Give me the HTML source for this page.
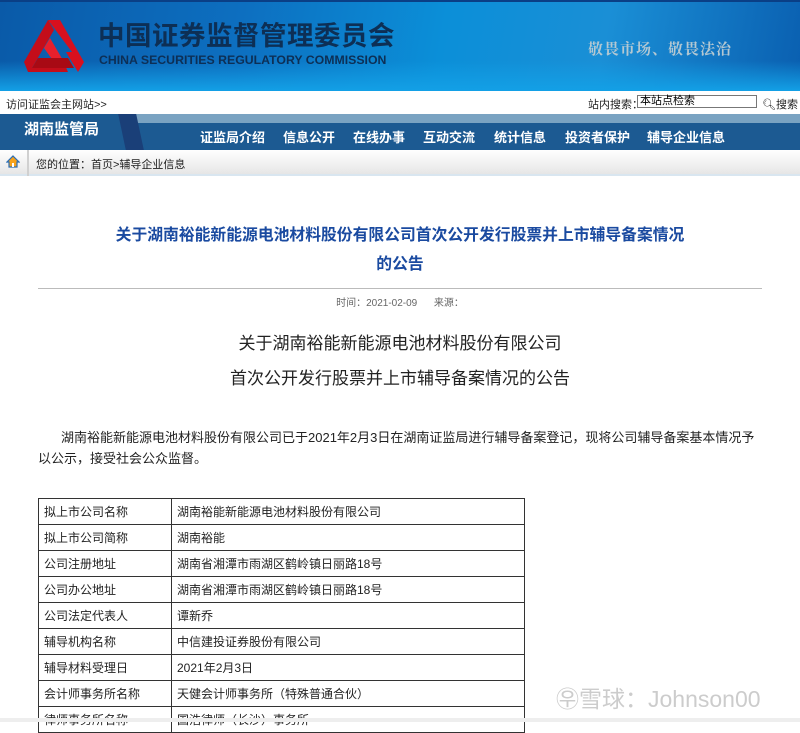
<!DOCTYPE html>
<html><head><meta charset="utf-8"><style>
*{margin:0;padding:0;box-sizing:border-box}
body{width:800px;height:722px;overflow:hidden;background:#fff;font-family:"Liberation Sans","Noto Sans CJK SC",sans-serif;position:relative}
.abs{position:absolute}
#hdr{left:0;top:0;width:800px;height:91px;background:linear-gradient(100deg,#0a5aa8 0%,#0d6fc0 30%,#0b8fd8 55%,#1a8fd6 75%,#0a5fb0 100%);border-top:2px solid #0a3f86}
#hdr .bot{position:absolute;left:0;bottom:0;width:800px;height:30px;background:linear-gradient(180deg,rgba(20,160,230,0) ,#13a0e6)}
.cn{left:98px;top:20px;font-size:26.5px;font-weight:bold;color:#0d2f55;letter-spacing:0.5px;white-space:nowrap;line-height:32px}
.en{left:99px;top:53px;font-size:12.3px;font-weight:bold;color:#0d2f55;white-space:nowrap;line-height:14px}
.motto{left:588px;top:38px;font-size:15px;color:#b4c8d2;font-family:"Noto Serif CJK SC",serif;font-weight:bold;letter-spacing:1px}
.sm{font-size:11px;color:#222;white-space:nowrap}
#nav{left:0;top:114px;width:800px;height:36px;background:#1c5a92;border-top:9px solid #7aa3c2}
.navt{top:127px;font-size:13px;color:#fff;font-weight:bold;white-space:nowrap}
#crumb{left:0;top:150px;width:800px;height:26px;background:linear-gradient(#fff,#e6e6e6);border-bottom:2px solid #d9e6f0}
table{position:absolute;left:38px;top:498px;width:487px;border-collapse:collapse;font-size:12px;color:#222}
td{border:1px solid #333;height:26px;padding:0 5px;white-space:nowrap}
td:first-child{width:133px}
</style></head><body>
<div id="hdr" class="abs"><div class="bot"></div></div>
<svg class="abs" style="left:24px;top:18px" width="62" height="56" viewBox="0 0 62 56">
<polygon points="24,2 36,2 60,44 54,54 42,34 48,34" fill="#d8101e"/>
<polygon points="24,2 30,12 8,50 32,50 38,40 44,54 4,54 0,44" fill="#c40d1a"/>
<polygon points="20,30 26,20 40,44 30,44" fill="#e8202c"/>
<polygon points="14,40 44,40 50,50 8,50" fill="#a80a14"/>
</svg>
<div class="abs cn">中国证券监督管理委员会</div>
<div class="abs en">CHINA SECURITIES REGULATORY COMMISSION</div>
<div class="abs motto">敬畏市场、敬畏法治</div>
<div class="abs sm" style="left:6px;top:96px">访问证监会主网站&gt;&gt;</div>
<div class="abs sm" style="left:588px;top:96px">站内搜索：</div>
<div class="abs" style="left:637px;top:95px;width:120px;height:13px;border:1px solid #777;font-size:11px;line-height:11px;padding-left:2px">本站点检索</div>
<div class="abs sm" style="left:762px;top:96px">🔍︎搜索</div>
<div id="nav" class="abs"></div>
<div class="abs" style="left:0;top:114px;width:128px;height:36px;background:#1c5a92"></div>
<div class="abs" style="left:122px;top:114px;width:18px;height:36px;background:#1a3f78;transform:skewX(12deg)"></div>
<div class="abs" style="left:24px;top:118px;font-size:15px;font-weight:bold;color:#fff">湖南监管局</div>
<div class="abs navt" style="left:200px">证监局介绍</div>
<div class="abs navt" style="left:283px">信息公开</div>
<div class="abs navt" style="left:353px">在线办事</div>
<div class="abs navt" style="left:423px">互动交流</div>
<div class="abs navt" style="left:494px">统计信息</div>
<div class="abs navt" style="left:565px">投资者保护</div>
<div class="abs navt" style="left:647px">辅导企业信息</div>
<div id="crumb" class="abs"></div>
<div class="abs" style="left:27px;top:150px;width:2px;height:26px;background:#d0d0d0"></div>
<svg class="abs" style="left:6px;top:155px" width="14" height="13" viewBox="0 0 14 13"><polygon points="7,1 13,7 11,7 11,12 3,12 3,7 1,7" fill="#f7a21b" stroke="#2a6db5" stroke-width="1.2"/><rect x="6" y="8" width="2" height="4" fill="#fff"/></svg>
<div class="abs sm" style="left:36px;top:156px">您的位置：首页&gt;辅导企业信息</div>
<div class="abs" style="left:20px;top:221px;width:760px;text-align:center;font-size:15.8px;font-weight:bold;color:#1a4aa0;line-height:29px">关于湖南裕能新能源电池材料股份有限公司首次公开发行股票并上市辅导备案情况<br>的公告</div>
<div class="abs" style="left:38px;top:288px;width:724px;height:1px;background:#bbb"></div>
<div class="abs" style="left:0;top:294px;width:800px;text-align:center;font-size:10px;color:#666">时间：2021-02-09 &nbsp; &nbsp; &nbsp;来源：</div>
<div class="abs" style="left:0;top:326px;width:800px;text-align:center;font-size:17px;color:#222;line-height:35px">关于湖南裕能新能源电池材料股份有限公司<br>首次公开发行股票并上市辅导备案情况的公告</div>
<div class="abs" style="left:38px;top:427px;width:722px;font-size:13px;color:#222;line-height:21px;text-indent:23px">湖南裕能新能源电池材料股份有限公司已于2021年2月3日在湖南证监局进行辅导备案登记，现将公司辅导备案基本情况予以公示，接受社会公众监督。</div>
<table>
<tr><td>拟上市公司名称</td><td>湖南裕能新能源电池材料股份有限公司</td></tr>
<tr><td>拟上市公司简称</td><td>湖南裕能</td></tr>
<tr><td>公司注册地址</td><td>湖南省湘潭市雨湖区鹤岭镇日丽路18号</td></tr>
<tr><td>公司办公地址</td><td>湖南省湘潭市雨湖区鹤岭镇日丽路18号</td></tr>
<tr><td>公司法定代表人</td><td>谭新乔</td></tr>
<tr><td>辅导机构名称</td><td>中信建投证券股份有限公司</td></tr>
<tr><td>辅导材料受理日</td><td>2021年2月3日</td></tr>
<tr><td>会计师事务所名称</td><td>天健会计师事务所（特殊普通合伙）</td></tr>
<tr><td>律师事务所名称</td><td>国浩律师（长沙）事务所</td></tr>
</table>
<div class="abs" style="left:0;top:718px;width:800px;height:4px;background:#eee"></div>
<div class="abs" style="left:556px;top:680px;font-size:23px;color:#ccc;white-space:nowrap">㉾雪球：Johnson00</div>
</body></html>
